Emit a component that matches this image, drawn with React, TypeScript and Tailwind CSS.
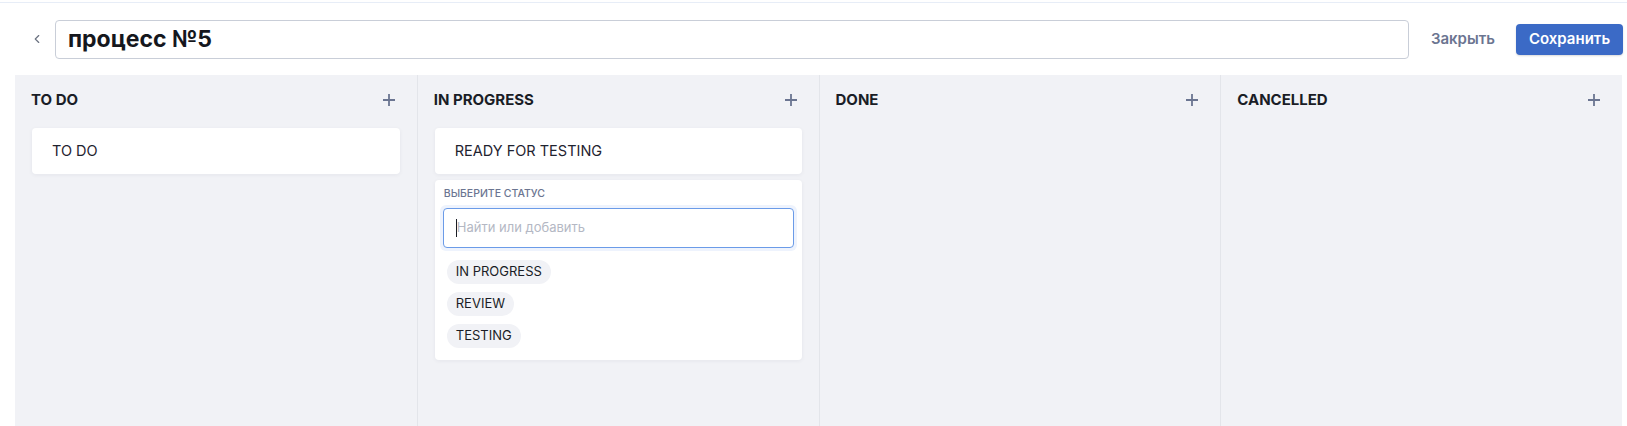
import { ChevronLeft } from "lucide-react";

type Column = {
  id: string;
  title: string;
  cards: string[];
};

const columns: Column[] = [
  { id: "todo", title: "TO DO", cards: ["TO DO"] },
  { id: "progress", title: "IN PROGRESS", cards: ["READY FOR TESTING"] },
  { id: "done", title: "DONE", cards: [] },
  { id: "cancelled", title: "CANCELLED", cards: [] },
];

const statuses = ["IN PROGRESS", "REVIEW", "TESTING"];

function PlusIcon() {
  return (
    <svg width="14" height="14" viewBox="0 0 14 14" className="text-[#6b7591]">
      <path d="M7 1v12M1 7h12" stroke="currentColor" strokeWidth="1.8" strokeLinecap="butt" />
    </svg>
  );
}

function StatusPicker() {
  return (
    <div className="mt-[6px] rounded-[4px] bg-white px-[8px] pb-[12px] pt-[8px] shadow-[0_1px_4px_rgba(30,40,70,0.06)]">
      <p className="pl-px text-[10.5px] font-medium uppercase leading-[12px] text-[#6b7591]">
        Выберите статус
      </p>
      <div className="-mx-[3px] mt-[5px] rounded-[6px] bg-[#eef3fd] p-[3px]">
        <div className="flex h-[40px] items-center rounded-[4px] border border-[#6b9be8] bg-white pl-[12px]">
          <span className="h-[18px] w-px bg-[#1a1d26]" />
          <span className="text-[13px] text-[#b4b8c4]">Найти или добавить</span>
        </div>
      </div>
      <div className="mt-[9px] flex flex-col items-start gap-[8px] pl-[4px]">
        {statuses.map((status) => (
          <span
            key={status}
            className="flex h-[24px] items-center rounded-full bg-[#f1f2f6] px-[9px] text-[13px] text-[#1a1d26]"
          >
            {status}
          </span>
        ))}
      </div>
    </div>
  );
}

export default function App() {
  return (
    <div
      className="h-[426px] w-full overflow-hidden bg-white"
      style={{ fontFamily: "Inter, 'Noto Sans', sans-serif" }}
    >
      <div className="h-[2px]" />
      <div className="h-px bg-[#e7edf7]" />

      <div className="flex h-[72px] items-center pl-[25px] pr-[4px]">
        <button className="flex h-[24px] w-[24px] items-center justify-center text-[#6b7280]">
          <ChevronLeft size={14} strokeWidth={2} />
        </button>
        <div className="ml-[6px] flex h-[39px] flex-1 items-center rounded-[4px] border border-[#c9ced8] px-[12px]">
          <span className="text-[23px] font-bold text-[#15171d]">процесс №5</span>
        </div>
        <button className="ml-[22px] text-[15px] font-semibold text-[#6b7591]">Закрыть</button>
        <button className="ml-[21px] flex h-[31px] w-[107px] items-center justify-center rounded-[4px] bg-[#3b6ac6] text-[15px] font-semibold text-white shadow-[0_1px_2px_rgba(0,0,0,0.15)]">
          Сохранить
        </button>
      </div>

      <div className="ml-[15px] mr-[5px] grid h-[360px] grid-cols-4 bg-[#f1f2f6]">
        {columns.map((column, index) => (
          <div
            key={column.id}
            className={index === 0 ? "px-[17px]" : "border-l border-[#e3e5ea] px-[17px]"}
          >
            <div className="flex h-[50px] items-center justify-between pr-[4px]">
              <h2 className="-ml-px text-[15px] font-bold text-[#1a1d26]">{column.title}</h2>
              <PlusIcon />
            </div>
            <div className="mt-[3px]">
              {column.cards.map((card) => (
                <div
                  key={card}
                  className="flex h-[46px] items-center rounded-[4px] bg-white pl-[20px] text-[14.5px] text-[#1f2330] shadow-[0_1px_4px_rgba(30,40,70,0.06)]"
                >
                  {card}
                </div>
              ))}
              {column.id === "progress" && <StatusPicker />}
            </div>
          </div>
        ))}
      </div>
    </div>
  );
}
